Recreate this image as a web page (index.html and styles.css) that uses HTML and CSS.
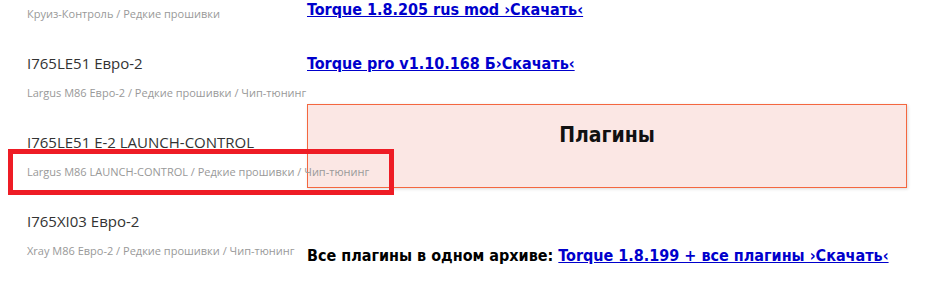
FILE: index.html
```html
<!DOCTYPE html>
<html lang="ru">
<head>
  <meta charset="UTF-8" />
  <meta name="viewport" content="width=device-width, initial-scale=1.0" />
  <title>Torque</title>
  <link rel="stylesheet" href="styles.css">
</head>
<body>
  <div class="page">
    <div class="firmware-list">
      <div class="item">
        <div class="item-tags">Круиз-Контроль / Редкие прошивки</div>
      </div>
      <div class="item">
        <div class="item-title">I765LE51 Евро-2</div>
        <div class="item-tags">Largus M86 Евро-2 / Редкие прошивки / Чип-тюнинг</div>
      </div>
      <div class="item">
        <div class="item-title">I765LE51 E-2 LAUNCH-CONTROL</div>
        <div class="item-tags">Largus M86 LAUNCH-CONTROL / Редкие прошивки / Чип-тюнинг</div>
      </div>
      <div class="item">
        <div class="item-title">I765XI03 Евро-2</div>
        <div class="item-tags">Xray M86 Евро-2 / Редкие прошивки / Чип-тюнинг</div>
      </div>
    </div>

    <div class="content">
      <p class="download"><a href="#">Torque 1.8.205 rus mod ›Скачать‹</a></p>
      <p class="download"><a href="#">Torque pro v1.10.168 Б›Скачать‹</a></p>
      <div class="plugins-box">
        <h2>Плагины</h2>
      </div>
      <p class="download archive">Все плагины в одном архиве: <a href="#">Torque 1.8.199 + все плагины ›Скачать‹</a></p>
    </div>
  </div>

  <!-- highlight frame -->
  <div class="highlight"></div>
</body>
</html>
```

FILE: styles.css
```css
body {
  margin: 0;
  background: #fff;
}

.page {
  display: grid;
  grid-template-columns: 307px 600px;
}

.firmware-list {
  position: relative;
  z-index: 1;
  padding: 6px 0 0 27px;
  font-family: "Open Sans", sans-serif;
}

.item {
  margin-bottom: 30px;
}

.item-title {
  font-size: 15px;
  line-height: 22px;
  color: #333;
  margin-bottom: 11px;
}

.item-tags {
  font-size: 11px;
  line-height: 16px;
  color: #999;
  white-space: nowrap;
}

.content {
  font-family: "DejaVu Sans Condensed", sans-serif;
  font-weight: bold;
  font-size: 16px;
}

.download {
  margin: 0 0 34px;
  line-height: 20px;
  white-space: nowrap;
}

.download a {
  color: #0000cc;
}

.archive {
  margin-top: 58px;
  color: #000;
}

.plugins-box {
  background: #fbe7e4;
  border: 1px solid #f4673f;
  box-shadow: 1px 1px 3px rgba(0, 0, 0, 0.15);
  padding: 18px 0 40px;
  text-align: center;
  margin-top: -4px;
}

.plugins-box h2 {
  margin: 0;
  font-size: 21px;
  line-height: 24px;
  color: #111;
}

.highlight {
  position: absolute;
  z-index: 2;
  left: 8px;
  top: 149px;
  width: 376px;
  height: 36px;
  border: 5px solid #ee1c25;
}
```
